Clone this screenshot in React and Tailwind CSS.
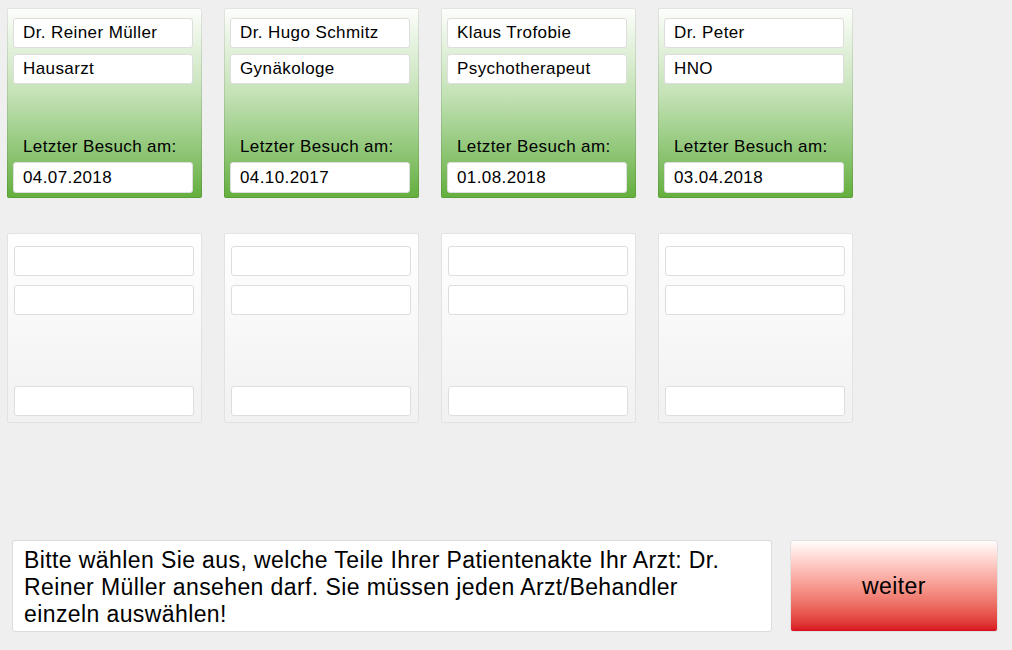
import React from "react";

const doctors = [
  { name: "Dr. Reiner Müller", type: "Hausarzt", date: "04.07.2018" },
  { name: "Dr. Hugo Schmitz", type: "Gynäkologe", date: "04.10.2017" },
  { name: "Klaus Trofobie", type: "Psychotherapeut", date: "01.08.2018" },
  { name: "Dr. Peter", type: "HNO", date: "03.04.2018" },
];

const field =
  "h-[30px] w-[180px] bg-white rounded-[3px] border border-[#dedede] px-[9px] flex items-center text-[17px] tracking-[0.4px] text-black";

function DoctorCard({ doc }) {
  return (
    <div className="w-[195px] h-[190px] rounded-[2px] border border-black/10 bg-origin-border bg-gradient-to-b from-[#fdfefc] via-[#c4e2b6] via-45% to-[#63af3b] pt-[9px] px-[5px] flex flex-col">
      <div className={field}>{doc.name}</div>
      <div className={field + " mt-[6px]"}>{doc.type}</div>
      <div className="mt-[auto] pl-[10px] text-[17px] tracking-[0.4px] text-black leading-none mb-[7px]">
        Letzter Besuch am:
      </div>
      <div className={field + " h-[31px] mb-[4px]"}>{doc.date}</div>
    </div>
  );
}

function EmptyCard() {
  return (
    <div className="w-[195px] h-[190px] rounded-[2px] border border-[#e2e2e2] bg-origin-border bg-gradient-to-b from-white to-[#f1f1f1] pt-[12px] px-[6px] flex flex-col">
      <div className={field}></div>
      <div className={field + " mt-[9px]"}></div>
      <div className={field + " mt-auto mb-[6px]"}></div>
    </div>
  );
}

export default function App() {
  return (
    <div
      className="w-[1012px] h-[650px] bg-[#efefef] flex flex-col pl-[7px] pt-[8px]"
      style={{ fontFamily: '"Liberation Sans", Arial, sans-serif' }}
    >
      <div className="flex gap-[22px]">
        {doctors.map((d) => (
          <DoctorCard key={d.name} doc={d} />
        ))}
      </div>
      <div className="flex gap-[22px] mt-[35px]">
        {[0, 1, 2, 3].map((i) => (
          <EmptyCard key={i} />
        ))}
      </div>

      <div className="flex mt-[117px] pl-[5px] gap-[18px]">
        <div className="w-[760px] h-[92px] bg-white rounded-[3px] border border-[#dcdcdc] px-[11px] pt-[6px] text-[23px] leading-[27px] tracking-[0.4px] text-black">
          Bitte wählen Sie aus, welche Teile Ihrer Patientenakte Ihr Arzt: Dr.
          <br />
          Reiner Müller ansehen darf. Sie müssen jeden Arzt/Behandler
          <br />
          einzeln auswählen!
        </div>
        <button className="w-[208px] h-[92px] rounded-[3px] border border-[#e0e0e0] bg-origin-border bg-gradient-to-b from-white to-[#d8001a] text-[23px] tracking-[0.4px] text-black flex items-center justify-center">
          weiter
        </button>
      </div>
    </div>
  );
}
